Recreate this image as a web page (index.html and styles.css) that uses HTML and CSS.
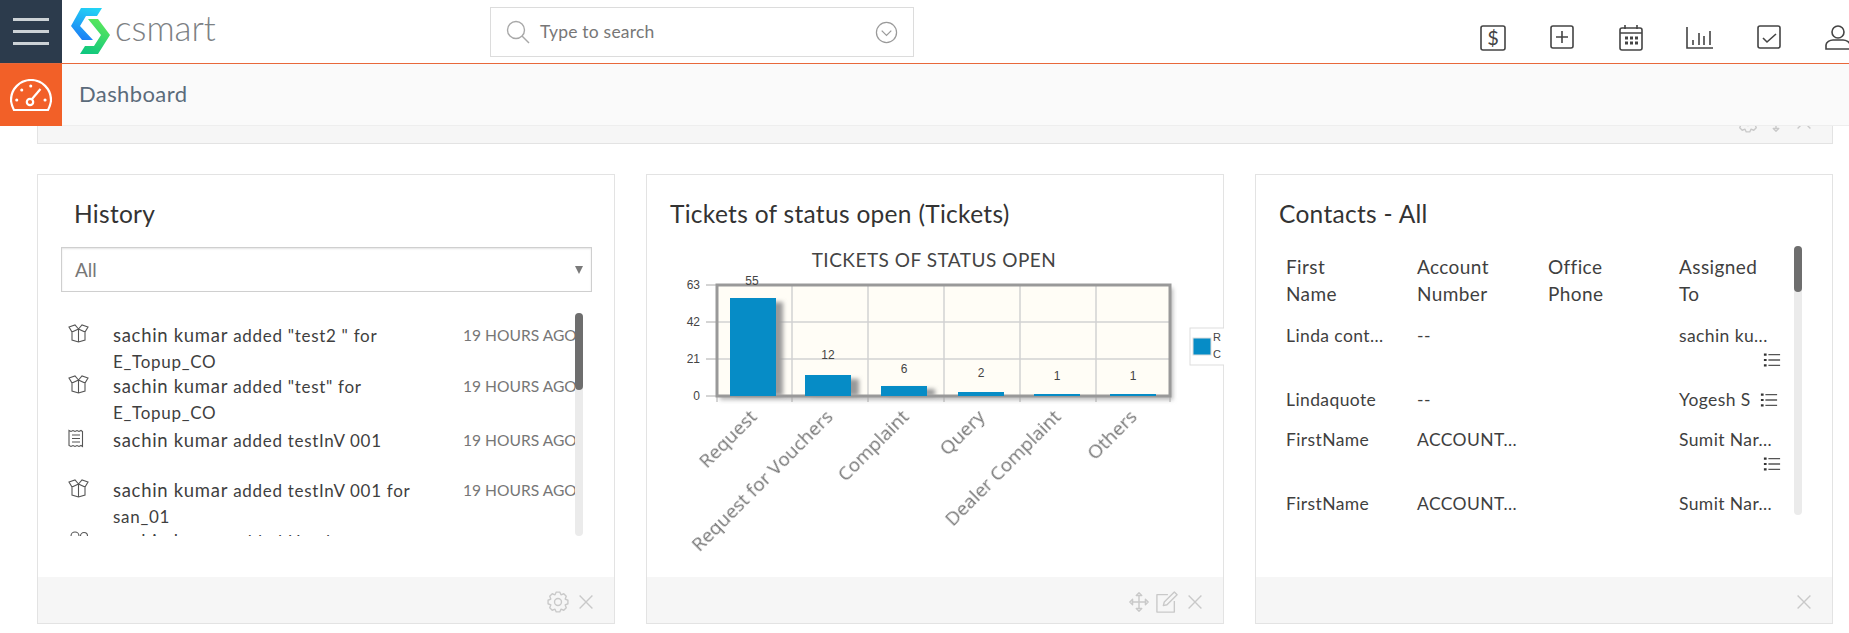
FILE: index.html
```html
<!DOCTYPE html>
<html lang="en">
<head>
    <meta charset="UTF-8">
    <title>Dashboard</title>
    <link rel="stylesheet" href="styles.css">
</head>
<body>
<svg class="sprites" width="0" height="0">
    <symbol id="i-gear" viewBox="0 0 24 24"><path d="M22.830 10.090V13.910L19.850 15.250 21.010 18.310 18.310 21.010 15.250 19.850 13.910 22.830H10.090L8.750 19.850 5.690 21.010 2.990 18.310 4.150 15.250 1.170 13.910V10.090L4.150 8.750 2.990 5.690 5.690 2.990 8.750 4.150 10.090 1.170H13.910L15.250 4.150 18.310 2.990 21.010 5.690 19.850 8.750Z"/><circle cx="12" cy="12" r="3.800"/></symbol>
    <symbol id="i-close" viewBox="0 0 24 24"><path d="M5 5l14 14M19 5L5 19"/></symbol>
    <symbol id="i-move" viewBox="0 0 24 24"><path d="M12 4v16M4 12h16M9 5l3-3 3 3zM9 19l3 3 3-3zM5 9l-3 3 3 3zM19 9l3 3-3 3z"/></symbol>
    <symbol id="i-edit" viewBox="0 0 24 24"><path d="M13 4H1v19h19V11M9 12l-1 4 4-1L23 4l-3-3z"/></symbol>
    <symbol id="i-box" viewBox="0 0 21 19"><path d="M4 7v9l6.500 2 6.500-2V7M10.500 5v13M10.500 5L7 1 1 3l3 5 6.500-3zM10.500 5L14 1l6 2-3 5-6.500-3z"/></symbol>
    <symbol id="i-bill" viewBox="0 0 21 19"><path d="M1 1.500l2 1 2-1 2 1 2-1 2 1 2-1 1.500 1v15l-1.500-1-2 1-2-1-2 1-2-1-2 1-2-1zM4 6h8M4 9.500h8M4 13h8"/></symbol>
    <symbol id="i-users" viewBox="0 0 21 19"><circle cx="7" cy="6" r="4"/><circle cx="16" cy="6" r="3.500"/><path d="M1 18c0-4 3-6 6-6s6 2 6 6M15 12c3 0 5 2 5 5"/></symbol>
    <symbol id="i-list" viewBox="0 0 20 20"><path class="list-dash" d="M6 4h13M6 10h13M6 16h13"/><path class="list-dot" d="M1 4h3M1 10h3M1 16h3"/></symbol>
</svg>

<header class="topbar">
    <button class="menu-btn"><span></span><span></span><span></span></button>
    <div class="logo">
        <svg class="logo-mark" viewBox="0 0 40 47">
            <defs>
                <linearGradient id="logoBlue" x1="0.7" y1="0" x2="0.4" y2="1">
                    <stop offset="0" stop-color="#22d3f5"/>
                    <stop offset="1" stop-color="#1d7ff5"/>
                </linearGradient>
                <linearGradient id="logoGreen" x1="0.7" y1="0" x2="0.3" y2="1">
                    <stop offset="0" stop-color="#5ce85a"/>
                    <stop offset="1" stop-color="#0fc77f"/>
                </linearGradient>
            </defs>
            <path fill="url(#logoGreen)" d="M17 11H27L39 27L27 46H9L14 38H23L30 27Z"/>
            <path fill="url(#logoBlue)" d="M10 0H31L26 8H15L9 18L22 32H11L0 18Z"/>
        </svg>
        <span class="logo-text">csmart</span>
    </div>
    <div class="search">
        <svg class="search-icon" viewBox="0 0 24 24"><circle cx="10" cy="10" r="8.500"/><path d="M16 16l7 7"/></svg>
        <span class="search-text">Type to search</span>
        <svg class="search-more" viewBox="0 0 24 24"><circle cx="12" cy="12" r="10.500"/><path d="M7 10l5 5 5-5"/></svg>
    </div>
    <nav class="top-icons">
        <svg viewBox="0 0 28 28"><rect x="2" y="2" width="24" height="24" rx="2"/><text x="14" y="21" class="dollar">$</text></svg>
        <svg viewBox="0 0 28 28"><rect x="3" y="2" width="22" height="22" rx="2"/><path d="M14 7v12M8 13h12"/></svg>
        <svg viewBox="0 0 28 28"><rect x="3" y="4" width="22" height="22" rx="2"/><path d="M3 9h22M8 1v4M20 1v4"/><path class="cal-dots" d="M8 14h3M13 14h3M18 14h3M8 19h3M13 19h3M18 19h3"/></svg>
        <svg viewBox="0 0 28 28"><path d="M1 3v21h26M7 21v-5M13 21V9M18 21v-9M24 21V7"/></svg>
        <svg viewBox="0 0 28 28"><rect x="3" y="2" width="22" height="22" rx="2"/><path d="M8 14l4 4 9-8"/></svg>
        <svg viewBox="0 0 28 28"><circle cx="14" cy="8" r="6"/><path d="M2 25v-4c0-3 4-5 7-5h10c3 0 7 2 7 5v4z"/></svg>
    </nav>
</header>

<div class="crumb">
    <div class="crumb-icon">
        <svg viewBox="0 0 42 32"><path d="M4 31C2 27 1 24 1 21a20 20 0 0 1 40 0c0 3-1 6-3 10z"/><circle cx="20" cy="23" r="3.200"/><path d="M22 20l8.500-10"/><path class="gauge-dot" d="M6.700 21h.1M11.700 11h.1M20.700 7h.1M35 21h.1"/></svg>
    </div>
    <span class="crumb-title">Dashboard</span>
</div>

<main class="page">
    <div class="strip">
        <div class="card-foot">
            <svg class="foot-icon"><use href="#i-gear"/></svg>
            <svg class="foot-icon"><use href="#i-move"/></svg>
            <svg class="foot-icon"><use href="#i-close"/></svg>
        </div>
    </div>

    <div class="cards">
        <section class="card">
            <h2 class="card-title title-history">History</h2>
            <div class="card-body">
                <div class="select">All<span class="select-arrow"></span></div>
                <div class="feed">
                    <div class="feed-row">
                        <svg class="feed-icon"><use href="#i-box"/></svg>
                        <p class="feed-text"><b>sachin kumar</b> added "test2 " for E_Topup_CO</p>
                        <span class="feed-time">19 HOURS AGO</span>
                    </div>
                    <div class="feed-row feed-row-spaced">
                        <svg class="feed-icon"><use href="#i-box"/></svg>
                        <p class="feed-text"><b>sachin kumar</b> added "test" for E_Topup_CO</p>
                        <span class="feed-time">19 HOURS AGO</span>
                    </div>
                    <div class="feed-row">
                        <svg class="feed-icon"><use href="#i-bill"/></svg>
                        <p class="feed-text"><b>sachin kumar</b> added testInV 001</p>
                        <span class="feed-time">19 HOURS AGO</span>
                    </div>
                    <div class="feed-row">
                        <svg class="feed-icon"><use href="#i-box"/></svg>
                        <p class="feed-text"><b>sachin kumar</b> added testInV 001 for san_01</p>
                        <span class="feed-time">19 HOURS AGO</span>
                    </div>
                    <div class="feed-row">
                        <svg class="feed-icon"><use href="#i-users"/></svg>
                        <p class="feed-text"><b>sachin kumar</b> added Handset</p>
                        <span class="feed-time">19 HOURS AGO</span>
                    </div>
                    <div class="scroll scroll-feed"><span></span></div>
                </div>
            </div>
            <div class="card-foot">
                <svg class="foot-icon"><use href="#i-gear"/></svg>
                <svg class="foot-icon"><use href="#i-close"/></svg>
            </div>
        </section>

        <section class="card">
            <h2 class="card-title">Tickets of status open (Tickets)</h2>
            <div class="card-body">
                <svg class="chart" viewBox="647 240 577 337">
                    <defs>
                        <filter id="soft" x="-20%" y="-20%" width="140%" height="140%"><feGaussianBlur stdDeviation="2"/></filter>
                    </defs>
                    <text class="chart-title" x="934" y="267">TICKETS OF STATUS OPEN</text>

                    <rect class="plot-shadow" x="720" y="288" width="453" height="112" filter="url(#soft)"/>
                    <rect class="plot" x="717" y="285" width="453" height="111"/>
                    <path class="grid" d="M792 285v111M868 285v111M944 285v111M1020 285v111M1096 285v111M717 322h453M717 359h453"/>
                    <path class="tick" d="M706 285h11M706 322h11M706 359h11M706 396h11M717 396v6M792 396v6M868 396v6M944 396v6M1020 396v6M1096 396v6M1170 396v6"/>
                    <rect class="plot-line" x="717" y="285" width="453" height="111"/>

                    <g class="y-labels">
                        <text x="700" y="289">63</text>
                        <text x="700" y="326">42</text>
                        <text x="700" y="363">21</text>
                        <text x="700" y="400">0</text>
                    </g>

                    <g class="bar-shadow" filter="url(#soft)">
                        <rect x="735" y="302" width="48" height="94"/>
                        <rect x="811" y="379" width="48" height="17"/>
                        <rect x="887" y="389" width="48" height="7"/>
                    </g>
                    <g class="bars">
                        <rect x="730" y="298" width="46" height="98"/>
                        <rect x="805" y="375" width="46" height="21"/>
                        <rect x="881" y="386" width="46" height="10"/>
                        <rect x="958" y="392" width="46" height="4"/>
                        <rect x="1034" y="394" width="46" height="2"/>
                        <rect x="1110" y="394" width="46" height="2"/>
                    </g>
                    <g class="bar-values">
                        <text x="752" y="285">55</text>
                        <text x="828" y="359">12</text>
                        <text x="904" y="373">6</text>
                        <text x="981" y="377">2</text>
                        <text x="1057" y="380">1</text>
                        <text x="1133" y="380">1</text>
                    </g>
                    <g class="x-labels">
                        <text transform="translate(758 418) rotate(-45)">Request</text>
                        <text transform="translate(834 418) rotate(-45)">Request for Vouchers</text>
                        <text transform="translate(910 418) rotate(-45)">Complaint</text>
                        <text transform="translate(986 418) rotate(-45)">Query</text>
                        <text transform="translate(1062 418) rotate(-45)">Dealer Complaint</text>
                        <text transform="translate(1138 418) rotate(-45)">Others</text>
                    </g>

                    <rect class="legend" x="1190" y="328" width="40" height="37"/>
                    <rect class="legend-swatch" x="1193" y="338" width="18" height="17"/>
                    <text class="legend-text" x="1213" y="341">R</text>
                    <text class="legend-text" x="1213" y="358">C</text>
                </svg>
            </div>
            <div class="card-foot">
                <svg class="foot-icon"><use href="#i-move"/></svg>
                <svg class="foot-icon"><use href="#i-edit"/></svg>
                <svg class="foot-icon"><use href="#i-close"/></svg>
            </div>
        </section>

        <section class="card">
            <h2 class="card-title">Contacts - All</h2>
            <div class="card-body">
                <div class="contacts">
                    <div class="contact-head">
                        <span>First Name</span>
                        <span>Account Number</span>
                        <span>Office Phone</span>
                        <span>Assigned To</span>
                    </div>
                    <div class="contact-row">
                        <span>Linda cont...</span>
                        <span>--</span>
                        <span></span>
                        <span>sachin ku...</span>
                        <svg class="row-menu row-menu-under"><use href="#i-list"/></svg>
                    </div>
                    <div class="contact-row contact-row-short">
                        <span>Lindaquote</span>
                        <span>--</span>
                        <span></span>
                        <span class="assigned-inline">Yogesh S<svg class="row-menu"><use href="#i-list"/></svg></span>
                    </div>
                    <div class="contact-row">
                        <span>FirstName</span>
                        <span>ACCOUNT...</span>
                        <span></span>
                        <span>Sumit Nar...</span>
                        <svg class="row-menu row-menu-under"><use href="#i-list"/></svg>
                    </div>
                    <div class="contact-row">
                        <span>FirstName</span>
                        <span>ACCOUNT...</span>
                        <span></span>
                        <span>Sumit Nar...</span>
                    </div>
                    <div class="scroll scroll-contacts"><span></span></div>
                </div>
            </div>
            <div class="card-foot">
                <svg class="foot-icon"><use href="#i-close"/></svg>
            </div>
        </section>
    </div>
</main>
</body>
</html>
```

FILE: styles.css
```css
:root {
    --navy: #2c3b4c;
    --orange: #f26028;
    --line: #e3e3e3;
    --foot: #f6f6f6;
    --text: #3f3f3f;
    --bar: #068cc6;
}

* {
    box-sizing: border-box;
}

body {
    margin: 0;
    height: 633px;
    overflow: hidden;
    background: white;
    color: var(--text);
    font-family: 'Lato', sans-serif;
}

.sprites {
    position: absolute;
}

/* top bar */
.topbar {
    position: relative;
    z-index: 2;
    display: flex;
    align-items: flex-start;
    height: 64px;
    background: white;
    border-bottom: 1px solid #e8683a;
    overflow: hidden;
}

.menu-btn {
    display: flex;
    flex-direction: column;
    justify-content: center;
    gap: 9px;
    flex: none;
    width: 62px;
    height: 63px;
    padding: 0 13px;
    border: none;
    background: var(--navy);
}

.menu-btn span {
    display: block;
    height: 3px;
    background: #ccd2d6;
}

.logo {
    display: flex;
    align-items: flex-start;
    flex: none;
    width: 428px;
    padding: 8px 0 0 9px;
}

.logo-mark {
    width: 40px;
    height: 47px;
}

.logo-text {
    margin: -1px 0 0 4px;
    font-size: 35px;
    font-weight: 300;
    line-height: 40px;
    color: #7d8184;
}

.search {
    display: flex;
    align-items: center;
    flex: none;
    width: 424px;
    height: 50px;
    margin-top: 7px;
    padding: 0 15px;
    border: 1px solid #dcdcdc;
}

.search-icon {
    flex: none;
    width: 24px;
    height: 24px;
    fill: none;
    stroke: #a8a8a8;
    stroke-width: 1.4;
}

.search-text {
    flex: 1;
    margin: 0 0 2px 10px;
    font-size: 17.500px;
    letter-spacing: .2px;
    color: #777;
}

.search-more {
    flex: none;
    width: 23px;
    height: 23px;
    fill: none;
    stroke: #9a9a9a;
    stroke-width: 1.3;
}

.top-icons {
    display: flex;
    gap: 41px;
    flex: none;
    margin: 24px 0 0 565px;
}

.top-icons svg {
    flex: none;
    width: 28px;
    height: 28px;
    fill: none;
    stroke: #444;
    stroke-width: 1.6;
}

.top-icons .dollar {
    font-size: 20px;
    fill: #444;
    stroke: none;
    text-anchor: middle;
}

.top-icons .cal-dots {
    stroke-width: 3;
}

/* breadcrumb */
.crumb {
    position: relative;
    z-index: 2;
    display: flex;
    align-items: center;
    height: 62px;
    background: #fafafa;
    border-bottom: 1px solid #eee;
}

.crumb-icon {
    display: flex;
    align-items: center;
    justify-content: center;
    width: 62px;
    height: 62px;
    background: var(--orange);
}

.crumb-icon svg {
    width: 42px;
    height: 32px;
    fill: none;
    stroke: white;
    stroke-width: 2.200;
}

.crumb-icon .gauge-dot {
    stroke-width: 3;
    stroke-linecap: round;
}

.crumb-title {
    margin: 0 0 2px 17px;
    font-size: 22px;
    color: #5b6b7b;
    letter-spacing: .4px;
}

/* page */
.page {
    padding-left: 37px;
}

.strip {
    width: 1796px;
    margin-top: -29px;
    margin-bottom: 30px;
    border: 1px solid var(--line);
    border-top: none;
}

.cards {
    display: grid;
    grid-template-columns: repeat(3, 578px);
    column-gap: 31px;
}

.card {
    display: flex;
    flex-direction: column;
    height: 450px;
    border: 1px solid var(--line);
}

.card-title {
    margin: 0;
    padding: 24px 0 0 23px;
    height: 71px;
    font-size: 24.500px;
    font-weight: 400;
    letter-spacing: .3px;
    line-height: 30px;
    color: #333;
}

.title-history {
    padding-left: 36px;
}

.card-body {
    flex: 1;
    min-height: 0;
}

.card-foot {
    display: flex;
    align-items: center;
    justify-content: flex-end;
    gap: 6px;
    height: 46px;
    padding: 4px 17px 0 0;
    background: var(--foot);
}

.foot-icon {
    width: 22px;
    height: 22px;
    fill: none;
    stroke: #c9c9c9;
    stroke-width: 1.5;
    stroke-linejoin: round;
}

/* history */
.select {
    position: relative;
    height: 45px;
    margin: 1px 22px 0 23px;
    padding-left: 13px;
    border: 1px solid #cfcfcf;
    box-shadow: inset 0 1px 2px #e4e4e4;
    font-size: 19px;
    line-height: 43px;
    color: #777;
}

.select-arrow {
    position: absolute;
    right: 8px;
    top: 18px;
    border-left: 4px solid transparent;
    border-right: 4px solid transparent;
    border-top: 8px solid #7a7a7a;
}

.feed {
    position: relative;
    height: 223px;
    margin-top: 21px;
    padding: 10px 0 0 30px;
    overflow: hidden;
}

.feed-row {
    display: flex;
    align-items: flex-start;
    min-height: 50px;
}

.feed-row-spaced {
    margin-bottom: 3px;
}

.feed-icon {
    flex: none;
    width: 21px;
    height: 19px;
    margin-top: 1px;
    fill: none;
    stroke: #555;
    stroke-width: 1.100;
}

.feed-text {
    flex: none;
    width: 310px;
    margin: 0 0 0 24px;
    font-size: 17px;
    letter-spacing: .7px;
    line-height: 25.500px;
}

.feed-text b {
    font-size: 18.500px;
    font-weight: 400;
}

.feed-time {
    flex: none;
    margin-left: 40px;
    font-size: 15.600px;
    line-height: 25px;
    color: #777;
    white-space: nowrap;
}

.scroll {
    position: absolute;
    width: 8px;
    background: #ebebeb;
    border-radius: 4px;
}

.scroll span {
    display: block;
    width: 100%;
    background: #6e6e6e;
    border-radius: 4px;
}

.scroll-feed {
    left: 537px;
    top: 0;
    height: 223px;
}

.scroll-feed span {
    height: 77px;
}

/* chart */
.chart {
    display: block;
    width: 577px;
    height: 337px;
    margin-top: -6px;
}

.chart-title {
    font-size: 19px;
    letter-spacing: .5px;
    fill: #444;
    text-anchor: middle;
}

.plot {
    fill: #fffdf6;
}

.plot-shadow {
    fill: #bbb;
}

.plot-line {
    fill: none;
    stroke: #999;
    stroke-width: 3;
}

.grid {
    fill: none;
    stroke: #d2d2d2;
    stroke-width: 1.500;
}

.tick {
    fill: none;
    stroke: #aaa;
}

.y-labels text {
    font-size: 12px;
    font-family: 'Liberation Sans', sans-serif;
    fill: #444;
    text-anchor: end;
}

.bar-values text {
    font-size: 12px;
    font-family: 'Liberation Sans', sans-serif;
    fill: #444;
    text-anchor: middle;
}

.bar-shadow {
    fill: #999;
}

.bars {
    fill: var(--bar);
}

.x-labels text {
    font-family: 'Open Sans', sans-serif;
    font-size: 19px;
    fill: #777;
    text-anchor: end;
    filter: blur(.4px);
}

.legend {
    fill: white;
    stroke: #ddd;
}

.legend-swatch {
    fill: var(--bar);
    stroke: #ddd;
}

.legend-text {
    font-family: 'Liberation Sans', sans-serif;
    font-size: 11px;
    fill: #444;
}

/* contacts */
.contacts {
    position: relative;
    height: 270px;
    padding: 7px 0 0 30px;
}

.contact-head,
.contact-row {
    display: grid;
    grid-template-columns: repeat(4, 131px);
    align-content: start;
}

.contact-head {
    height: 71px;
    font-size: 19px;
    letter-spacing: .4px;
    line-height: 27px;
}

.contact-head span {
    width: 90px;
}

.contact-row {
    height: 64px;
    font-size: 17.500px;
    letter-spacing: .4px;
    line-height: 24px;
}

.contact-row-short {
    height: 40px;
}

.row-menu {
    width: 18px;
    height: 18px;
    fill: none;
    stroke-width: 1.400;
    stroke: #555;
}

.list-dot {
    stroke: #333;
    stroke-width: 2.400;
}

.row-menu-under {
    grid-column: 4;
    justify-self: end;
    margin: 3px 29px 0 0;
}

.assigned-inline {
    display: flex;
    align-items: center;
    gap: 9px;
}

.scroll-contacts {
    left: 538px;
    top: 0;
    height: 269px;
}

.scroll-contacts span {
    height: 46px;
}
```
